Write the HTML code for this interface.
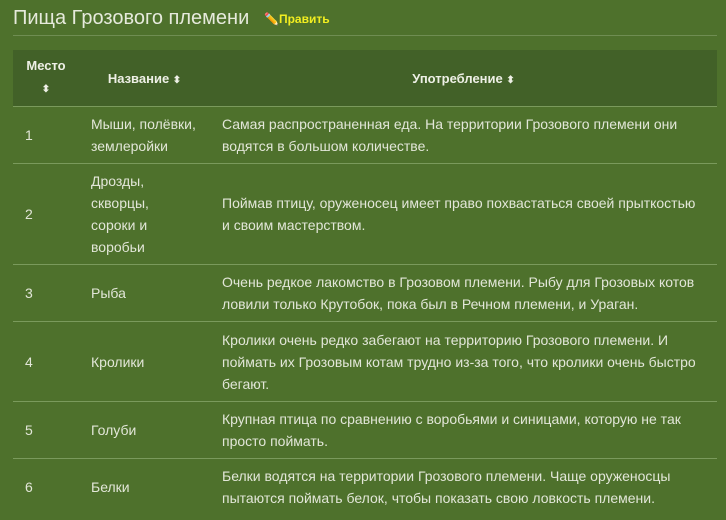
<!DOCTYPE html>
<html><head><meta charset="utf-8"><style>
body{margin:0;width:726px;height:520px;overflow:hidden;background:#4e712c;font-family:"Liberation Sans",Arial,sans-serif;color:#e2e6d8;}
h2{position:absolute;left:13px;top:7px;margin:0;font-weight:normal;font-size:20px;color:#e6eadc;}
.ed{position:absolute;left:264px;top:12px;font-size:12px;color:#f2ee20;font-weight:bold;}
.hr{position:absolute;left:13px;top:35px;width:704px;height:1px;background:#6f8d52;}
table{position:absolute;left:13px;top:50px;width:704px;border-collapse:collapse;font-size:14px;table-layout:fixed;}
th{background:#426128;font-weight:bold;font-size:13px;height:56px;color:#eef0e6;padding:0;}
td{border-top:1px solid #7a9a5c;padding:0 12px;line-height:22px;vertical-align:middle;}
.s{font-size:10px;}
</style></head><body>
<h2>Пища Грозового племени</h2>
<div class="ed">✏️Править</div>
<div class="hr"></div>
<table>
<colgroup><col style="width:66px"><col style="width:131px"><col></colgroup>
<tr><th style="line-height:22px">Место<br><span class="s">⬍</span></th><th>Название <span class="s">⬍</span></th><th>Употребление <span class="s">⬍</span></th></tr>
<tr style="height:57px"><td>1</td><td>Мыши, полёвки, землеройки</td><td>Самая распространенная еда. На территории Грозового племени они водятся в большом количестве.</td></tr>
<tr style="height:101px"><td>2</td><td>Дрозды,<br>скворцы,<br>сороки и<br>воробьи</td><td>Поймав птицу, оруженосец имеет право похвастаться своей прыткостью и своим мастерством.</td></tr>
<tr style="height:57px"><td>3</td><td>Рыба</td><td>Очень редкое лакомство в Грозовом племени. Рыбу для Грозовых котов ловили только Крутобок, пока был в Речном племени, и Ураган.</td></tr>
<tr style="height:80px"><td>4</td><td>Кролики</td><td>Кролики очень редко забегают на территорию Грозового племени. И поймать их Грозовым котам трудно из-за того, что кролики очень быстро бегают.</td></tr>
<tr style="height:57px"><td>5</td><td>Голуби</td><td>Крупная птица по сравнению с воробьями и синицами, которую не так просто поймать.</td></tr>
<tr style="height:57px"><td>6</td><td>Белки</td><td>Белки водятся на территории Грозового племени. Чаще оруженосцы пытаются поймать белок, чтобы показать свою ловкость племени.</td></tr>
</table>
</body></html>
